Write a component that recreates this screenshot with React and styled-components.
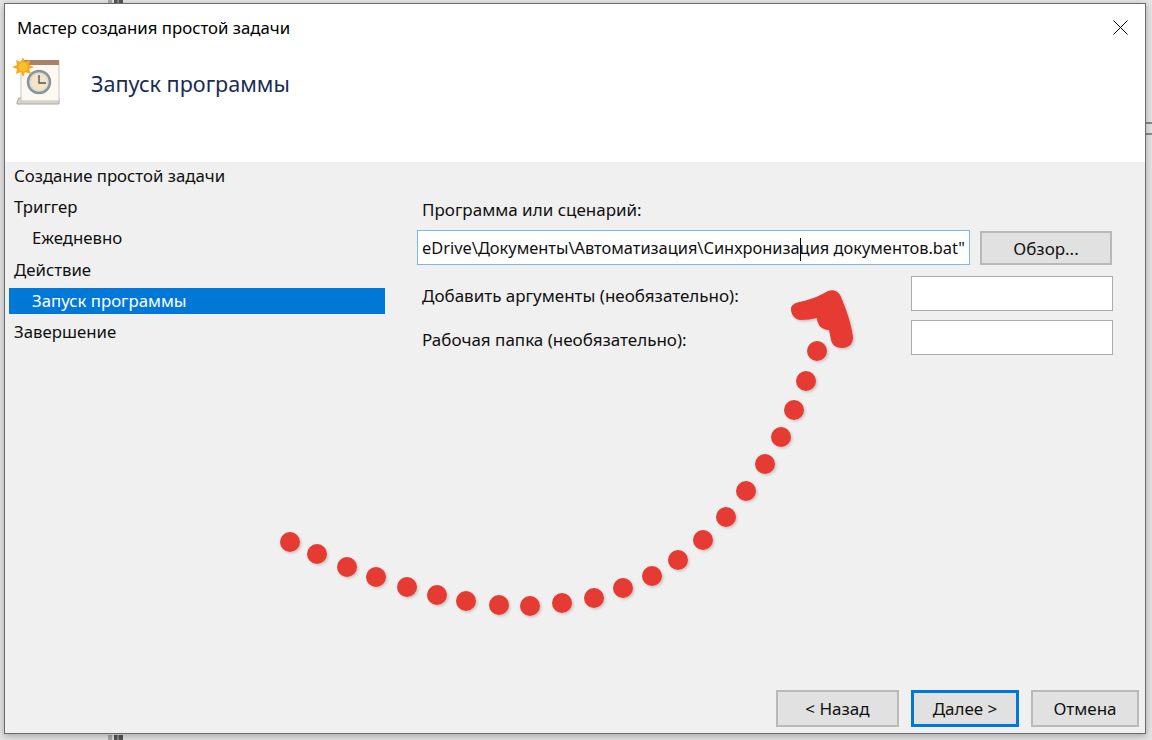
import React from "react"
import styled, { createGlobalStyle } from "styled-components"

const GlobalStyle = createGlobalStyle`
  html, body { margin: 0; padding: 0; }
  body {
    width: 1152px;
    height: 740px;
    overflow: hidden;
    background: #e4e4e4;
    font-family: "Noto Sans", "Open Sans", sans-serif;
    color: #111;
  }
`

const Desktop = styled.div`
  position: relative;
  width: 1152px;
  height: 740px;
  padding: 3px 6px 6px 4px;
  box-sizing: border-box;
`

const BehindBar = styled.div`
  position: absolute;
  left: 108px;
  width: 15px;
  height: ${p => p.$h}px;
  top: ${p => p.$top}px;
  background: linear-gradient(90deg, #a8a8a8 0 4px, #e0e0e0 4px 6px, #555 6px 9px, #888 9px 11px, #555 11px 15px);
`

const BehindLine = styled.div`
  position: absolute;
  left: 1146px;
  width: 6px;
  height: 2px;
  top: ${p => p.$top}px;
  background: #8a8a8a;
`

const Window = styled.div`
  position: relative;
  width: 100%;
  height: 100%;
  box-sizing: border-box;
  border: 1px solid #6b6b6b;
  background: #f0f0f0;
  box-shadow: 0 2px 7px rgba(0, 0, 0, 0.28);
  display: flex;
  flex-direction: column;
`

const Header = styled.div`
  height: 158px;
  flex: none;
  background: #fff;
`

const TitleBar = styled.div`
  height: 46px;
  display: flex;
  align-items: center;
  justify-content: space-between;
  padding: 0 17px 0 12px;
  font-size: 16.8px;
  color: #000;
`

const CloseButton = styled.svg`
  width: 15px;
  height: 15px;
  margin-top: 1px;
`

const Heading = styled.div`
  display: flex;
  align-items: center;
  gap: 29px;
  padding-left: 5px;
  margin-top: 8px;
  font-size: 21.6px;
  color: #1a2c55;
`

const Body = styled.div`
  flex: 1;
  display: flex;
  min-height: 0;
`

const Sidebar = styled.ul`
  list-style: none;
  margin: 0 0 0 4px;
  padding: 0;
  width: 376px;
  flex: none;
`

const Step = styled.li`
  height: 26px;
  margin-bottom: 5.4px;
  display: flex;
  align-items: center;
  padding-left: ${p => (p.$sub ? 23 : 5)}px;
  font-size: 16.8px;
  color: ${p => (p.$active ? "#fff" : "#111")};
  background: ${p => (p.$active ? "#0078d7" : "transparent")};
`

const Main = styled.div`
  flex: 1;
  padding: 37px 32px 0 32px;
  display: flex;
  flex-direction: column;
`

const Label = styled.div`
  font-size: 17px;
  line-height: 22px;
  padding-left: 5px;
`

const ArgLabel = styled(Label)`
  padding-top: 5px;
`

const ProgramRow = styled.div`
  display: flex;
  align-items: flex-end;
  gap: 10px;
  margin-top: 9px;
`

const ProgramInput = styled.div`
  width: 553px;
  height: 35px;
  box-sizing: border-box;
  border: 1px solid #7ab8ea;
  background: #fff;
  display: flex;
  align-items: center;
  justify-content: flex-end;
  padding: 2px 4px 0 0;
  font-size: 16.4px;
  white-space: nowrap;
  overflow: hidden;
`

const Caret = styled.span`
  display: inline-block;
  width: 0;
  height: 23px;
  border-left: 1px solid #000;
  margin-right: -1px;
  vertical-align: middle;
`

const Button = styled.div`
  box-sizing: border-box;
  width: ${p => p.$w}px;
  height: ${p => p.$h || 37}px;
  display: flex;
  align-items: center;
  justify-content: center;
  background: #e1e1e1;
  border: ${p => (p.$focus ? "3px solid #0078d7" : "2px solid #b9b9b9")};
  font-size: 17px;
  color: #111;
`

const ArgRow = styled.div`
  display: flex;
  align-items: center;
  justify-content: space-between;
  width: 696px;
  height: 35px;
  margin-top: ${p => p.$mt}px;
`

const TextBox = styled.div`
  width: 202px;
  height: 35px;
  box-sizing: border-box;
  border: 1px solid #ababab;
  background: #fff;
`

const Footer = styled.div`
  position: absolute;
  right: 6px;
  bottom: 6px;
  display: flex;
  gap: 12px;
`

const Annotation = styled.svg`
  position: absolute;
  left: 0;
  top: 0;
  width: 1152px;
  height: 740px;
  pointer-events: none;
`

const steps = [
  { text: "Создание простой задачи" },
  { text: "Триггер" },
  { text: "Ежедневно", sub: true },
  { text: "Действие" },
  { text: "Запуск программы", sub: true, active: true },
  { text: "Завершение" },
]

const dots = [
  [290, 542], [317, 554], [347, 567], [376, 577], [407, 587], [437, 595],
  [466, 601], [499, 605], [530, 606], [562, 603], [594, 598], [623, 588],
  [652, 576], [678, 560], [703, 540], [726, 517], [746, 491], [765, 464],
  [781, 437], [794, 410], [806, 381], [817, 351],
]

const TaskIcon = () => (
  <svg width="52" height="50" viewBox="0 0 52 50">
    <path d="M7 44 L9 40 L49 40 L49 46 L7 46 Z" fill="#d8d4c8" stroke="#a8a8a8" />
    <rect x="11" y="3" width="38" height="40" fill="#fbf9f2" stroke="#c9c5ba" />
    <rect x="14" y="2" width="35" height="5" fill="#a9806a" />
    <circle cx="29" cy="24" r="11" fill="#d9dde0" stroke="#8f9396" strokeWidth="2.5" />
    <circle cx="29" cy="24" r="8" fill="#f4e6c4" />
    <path d="M29 17 V25 H36" fill="none" stroke="#555" strokeWidth="1.4" />
    <path d="M14 0 L16 5 L21 3 L20 8 L25 10 L20 12 L22 17 L16 15 L14 20 L12 15 L7 17 L8 12 L3 10 L8 8 L7 3 L12 5 Z" fill="#f7a81b" transform="translate(-1 -1)" />
    <circle cx="13" cy="9" r="4.5" fill="#fbc02d" />
  </svg>
)

export default function App() {
  return (
    <Desktop>
      <GlobalStyle />
      <BehindBar $top={0} $h={3} />
      <BehindBar $top={735} $h={5} />
      <BehindLine $top={122} />
      <BehindLine $top={133} />
      <Window>
        <Header>
          <TitleBar>
            <span>Мастер создания простой задачи</span>
            <CloseButton viewBox="0 0 15 15">
              <path d="M0.5 0.5 L14.5 14.5 M14.5 0.5 L0.5 14.5" stroke="#000" strokeWidth="1" fill="none" />
            </CloseButton>
          </TitleBar>
          <Heading>
            <TaskIcon />
            <span>Запуск программы</span>
          </Heading>
        </Header>
        <Body>
          <Sidebar>
            {steps.map(s => (
              <Step key={s.text} $sub={s.sub} $active={s.active}>{s.text}</Step>
            ))}
          </Sidebar>
          <Main>
            <Label>Программа или сценарий:</Label>
            <ProgramRow>
              <ProgramInput>
                <span>eDrive\Документы\Автоматизация\Синхрониза<Caret />ция документов.bat"</span>
              </ProgramInput>
              <Button $w={132} $h={34}>Обзор...</Button>
            </ProgramRow>
            <ArgRow $mt={11}>
              <ArgLabel>Добавить аргументы (необязательно):</ArgLabel>
              <TextBox />
            </ArgRow>
            <ArgRow $mt={9}>
              <ArgLabel>Рабочая папка (необязательно):</ArgLabel>
              <TextBox />
            </ArgRow>
          </Main>
        </Body>
        <Footer>
          <Button $w={123}>&lt; Назад</Button>
          <Button $w={108} $focus>Далее &gt;</Button>
          <Button $w={108}>Отмена</Button>
        </Footer>
      </Window>
      <Annotation viewBox="0 0 1152 740">
        <defs>
          <filter id="soft" x="-20%" y="-20%" width="150%" height="150%">
            <feDropShadow dx="1.5" dy="1.5" stdDeviation="1.2" floodColor="#000" floodOpacity="0.18" />
          </filter>
        </defs>
        <g fill="#e53b30" filter="url(#soft)">
          {dots.map(([x, y]) => (
            <circle key={x} cx={x} cy={y} r="10" />
          ))}
          <path d="M799 302 C809 300 820 296 828 291 C834 289 839 292 841 297 C846 309 851 322 853 337 C853 344 849 348 842 348 C836 348 832 345 831 340 L829 330 C822 330 817 325 817 318 C812 319 807 320 801 320 C795 320 791 315 791 309 C791 305 795 303 799 302 Z" />
        </g>
      </Annotation>
    </Desktop>
  )
}
